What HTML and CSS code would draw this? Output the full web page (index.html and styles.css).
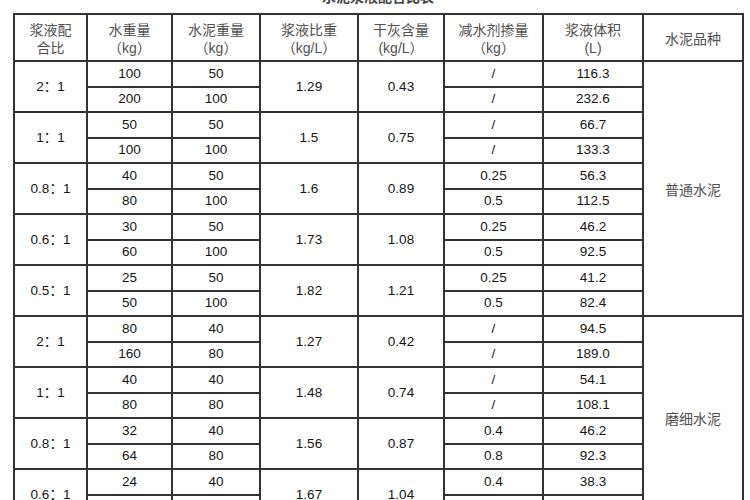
FILE: index.html
```html
<!DOCTYPE html>
<html lang="zh">
<head>
<meta charset="utf-8">
<title>水泥浆液配合比表</title>
<link rel="stylesheet" href="styles.css">
</head>
<body>
<div class="page">
  <div class="title">水泥浆液配合比表</div>
  <table class="mix">
    <colgroup>
      <col class="c1"><col class="c2"><col class="c3"><col class="c4"><col class="c5"><col class="c6"><col class="c7"><col class="c8">
    </colgroup>
    <thead>
      <tr class="head">
        <th>浆液配<br>合比</th>
        <th>水重量<br>（kg）</th>
        <th>水泥重量<br>（kg）</th>
        <th>浆液比重<br>（kg/L）</th>
        <th>干灰含量<br>(kg/L）</th>
        <th>减水剂掺量<br>（kg）</th>
        <th>浆液体积<br>(L)</th>
        <th>水泥品种</th>
      </tr>
    </thead>
    <tbody>
      <tr><td rowspan="2">2：1</td><td>100</td><td>50</td><td rowspan="2">1.29</td><td rowspan="2">0.43</td><td>/</td><td>116.3</td><td rowspan="10" class="kind">普通水泥</td></tr>
      <tr><td>200</td><td>100</td><td>/</td><td>232.6</td></tr>
      <tr><td rowspan="2">1：1</td><td>50</td><td>50</td><td rowspan="2">1.5</td><td rowspan="2">0.75</td><td>/</td><td>66.7</td></tr>
      <tr><td>100</td><td>100</td><td>/</td><td>133.3</td></tr>
      <tr><td rowspan="2">0.8：1</td><td>40</td><td>50</td><td rowspan="2">1.6</td><td rowspan="2">0.89</td><td>0.25</td><td>56.3</td></tr>
      <tr><td>80</td><td>100</td><td>0.5</td><td>112.5</td></tr>
      <tr><td rowspan="2">0.6：1</td><td>30</td><td>50</td><td rowspan="2">1.73</td><td rowspan="2">1.08</td><td>0.25</td><td>46.2</td></tr>
      <tr><td>60</td><td>100</td><td>0.5</td><td>92.5</td></tr>
      <tr><td rowspan="2">0.5：1</td><td>25</td><td>50</td><td rowspan="2">1.82</td><td rowspan="2">1.21</td><td>0.25</td><td>41.2</td></tr>
      <tr><td>50</td><td>100</td><td>0.5</td><td>82.4</td></tr>
      <tr><td rowspan="2">2：1</td><td>80</td><td>40</td><td rowspan="2">1.27</td><td rowspan="2">0.42</td><td>/</td><td>94.5</td><td rowspan="8" class="kind">磨细水泥</td></tr>
      <tr><td>160</td><td>80</td><td>/</td><td>189.0</td></tr>
      <tr><td rowspan="2">1：1</td><td>40</td><td>40</td><td rowspan="2">1.48</td><td rowspan="2">0.74</td><td>/</td><td>54.1</td></tr>
      <tr><td>80</td><td>80</td><td>/</td><td>108.1</td></tr>
      <tr><td rowspan="2">0.8：1</td><td>32</td><td>40</td><td rowspan="2">1.56</td><td rowspan="2">0.87</td><td>0.4</td><td>46.2</td></tr>
      <tr><td>64</td><td>80</td><td>0.8</td><td>92.3</td></tr>
      <tr><td rowspan="2">0.6：1</td><td>24</td><td>40</td><td rowspan="2">1.67</td><td rowspan="2">1.04</td><td>0.4</td><td>38.3</td></tr>
      <tr><td>48</td><td>80</td><td>0.8</td><td>76.6</td></tr>
    </tbody>
  </table>
</div>
</body>
</html>
```

FILE: styles.css
```css
html, body {
  margin: 0;
  padding: 0;
  background: #ffffff;
}

body {
  width: 750px;
  height: 500px;
  overflow: hidden;
  font-family: "Liberation Sans", "Noto Sans CJK SC", sans-serif;
  color: #1a1a1a;
}

.page {
  padding: 0 0 0 13px;
}

.title {
  width: 730px;
  text-align: center;
  font-family: "Noto Sans CJK SC", sans-serif;
  font-weight: bold;
  font-size: 14px;
  line-height: 16px;
  margin-top: -12px;
  margin-bottom: 9px;
  color: #444;
}

.mix {
  border-collapse: collapse;
  table-layout: fixed;
  width: 730px;
  border: 2px solid #333;
}

.c1 { width: 73px; }
.c2 { width: 85px; }
.c3 { width: 88px; }
.c4 { width: 98px; }
.c5 { width: 86px; }
.c6 { width: 99px; }
.c7 { width: 100px; }
.c8 { width: 100px; }

.mix th,
.mix td {
  border: 2px solid #333;
  padding: 0;
  text-align: center;
  vertical-align: middle;
  font-size: 13.5px;
}

.mix th {
  font-weight: normal;
  color: #505050;
  font-size: 14px;
  line-height: 18px;
  padding-top: 3px;
}

.head {
  height: 47px;
}

.mix tbody tr {
  height: 25.5px;
}

.mix td {
  line-height: 16px;
  color: #151515;
}

.mix td.kind {
  color: #505050;
  font-size: 14px;
  font-family: "Noto Sans CJK SC", sans-serif;
}
```
